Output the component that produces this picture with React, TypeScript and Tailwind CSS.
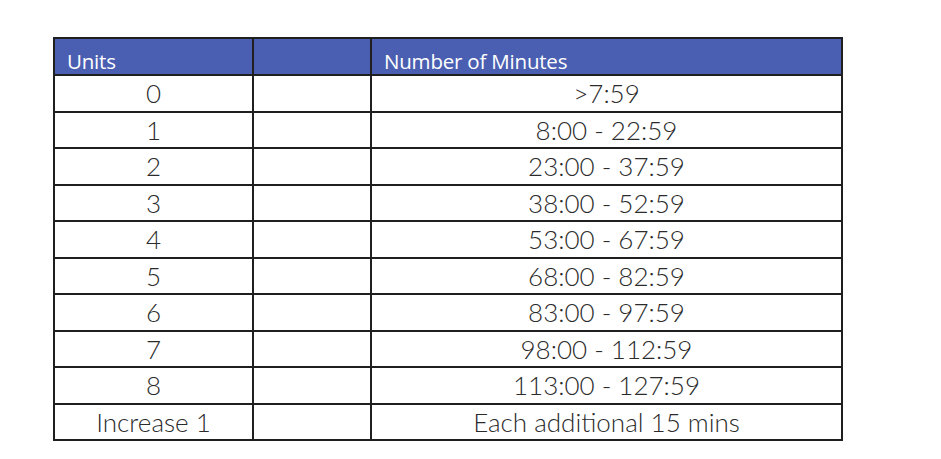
import React from 'react';

const rows: [string, string][] = [
  ['0', '>7:59'],
  ['1', '8:00 - 22:59'],
  ['2', '23:00 - 37:59'],
  ['3', '38:00 - 52:59'],
  ['4', '53:00 - 67:59'],
  ['5', '68:00 - 82:59'],
  ['6', '83:00 - 97:59'],
  ['7', '98:00 - 112:59'],
  ['8', '113:00 - 127:59'],
  ['Increase 1', 'Each additional 15 mins'],
];

const App = (): React.JSX.Element => {
  return (
    <div className="h-[459px] w-[941px] bg-white pl-[53px] pt-[37px]">
      <table className="w-[790px] table-fixed border-collapse border-2 border-[#1f1f1f]">
        <colgroup>
          <col className="w-[199px]" />
          <col className="w-[118px]" />
          <col />
        </colgroup>
        <thead>
          <tr className="h-[37px] bg-[#4a5fb1] font-['Open_Sans',sans-serif] text-[20.5px] text-white">
            <th className="border-2 border-[#1f1f1f] px-[12px] pb-0 pt-[8px] text-left align-bottom font-normal leading-[26px] tracking-[-0.2px]">
              Units
            </th>
            <th className="border-2 border-[#1f1f1f]" />
            <th className="border-2 border-[#1f1f1f] px-[12px] pt-[8px] text-left align-bottom font-normal leading-[26px] tracking-[-0.2px]">
              Number of Minutes
            </th>
          </tr>
        </thead>
        <tbody className="font-['Lato',sans-serif] text-[26px] font-light text-[#2b2b2b]">
          {rows.map(([units, minutes]) => (
            <tr key={units} className="h-[36.5px]">
              <td className="border-2 border-[#1f1f1f] pt-[1px] text-center leading-[31px]">{units}</td>
              <td className="border-2 border-[#1f1f1f]" />
              <td className="border-2 border-[#1f1f1f] pt-[1px] text-center leading-[31px]">{minutes}</td>
            </tr>
          ))}
        </tbody>
      </table>
    </div>
  );
};

export default App;
